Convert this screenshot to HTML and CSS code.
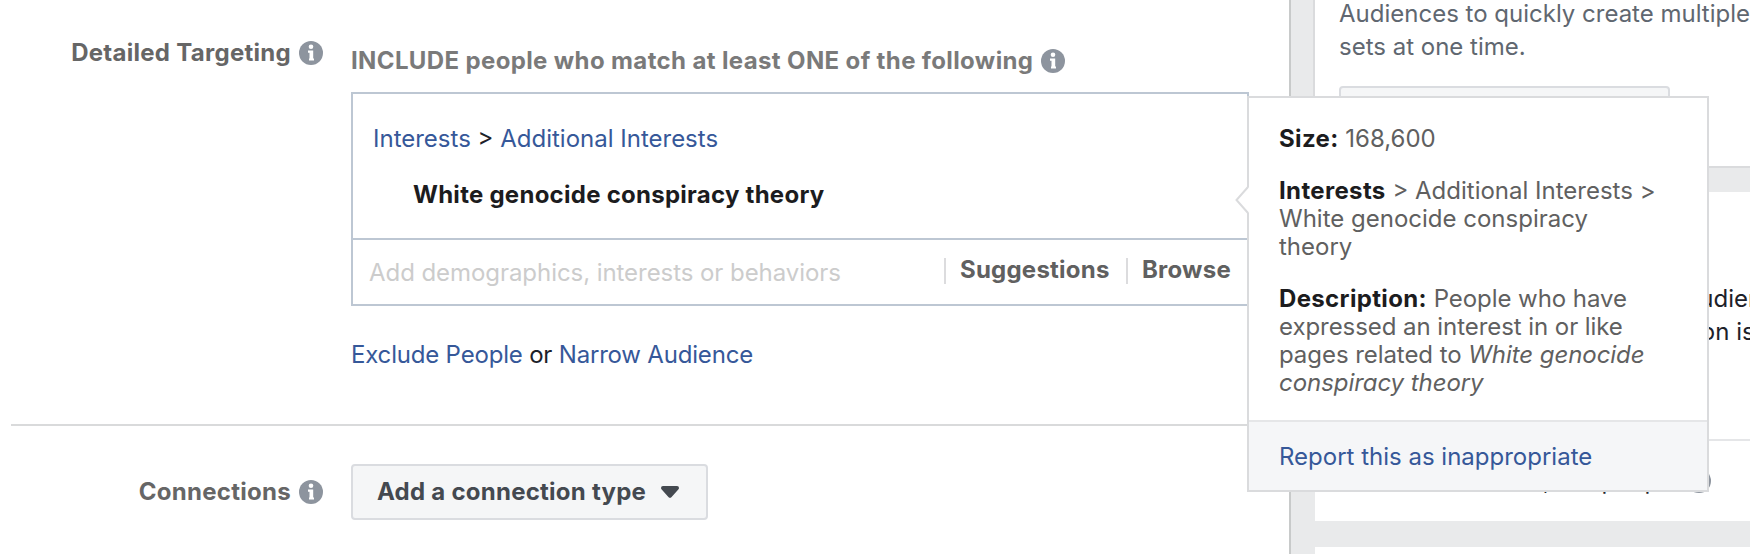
FILE: index.html
```
<!DOCTYPE html>
<html lang="en">
<head>
    <meta charset="UTF-8">
    <meta name="viewport" content="width=device-width, initial-scale=1.0">
    <title>Detailed Targeting</title>
    <link rel="stylesheet" href="styles.css">
</head>
<body>
    <svg class="defs" width="0" height="0">
        <symbol id="info" viewBox="0 0 24 24">
            <circle cx="12" cy="12" r="12" fill="#8d949e"/>
            <circle cx="12" cy="5.8" r="2.3" fill="#fff"/>
            <path d="M9 9.500h5.200v8h.8v2h-5v-2h.5v-5.800H9z" fill="#fff"/>
        </symbol>
    </svg>
    <div class="page">
        <div class="form">
            <div class="row targeting">
                <div class="label">Detailed Targeting <svg class="info"><use href="#info"/></svg></div>
                <div class="field">
                    <div class="include">INCLUDE people who match at least ONE of the following <svg class="info"><use href="#info"/></svg></div>
                    <div class="picker">
                        <div class="selected">
                            <div class="crumbs"><a href="#">Interests</a> &gt; <a href="#">Additional Interests</a></div>
                            <div class="interest">White genocide conspiracy theory</div>
                        </div>
                        <div class="search">
                            <div class="placeholder">Add demographics, interests or behaviors</div>
                            <div class="action suggestions">Suggestions</div>
                            <div class="action browse">Browse</div>
                        </div>
                    </div>
                    <div class="refine"><a href="#">Exclude People</a> or <a href="#">Narrow Audience</a></div>
                </div>
            </div>
            <div class="row connections">
                <div class="label">Connections <svg class="info"><use href="#info"/></svg></div>
                <div class="field">
                    <button class="dropdown"><span>Add a connection type</span>
                        <svg width="18" height="12" viewBox="0 0 18 12"><path d="M2 0h14q2 0 2 2 0 .9-.7 1.600L10.600 11q-1.600 1.700-3.200 0L.7 3.600Q0 2.900 0 2 0 0 2 0z" fill="#444950"/></svg>
                    </button>
                </div>
            </div>
        </div>
        <div class="sidebar">
            <div class="card tip">
                <p>Audiences to quickly create multiple<br>sets at one time.</p>
                <div class="card-button"></div>
            </div>
            <div class="card audience">
                <div class="definition">Your audience<br>selection is</div>
                <div class="reach">Potential Reach: 230,000 people <svg class="info"><use href="#info"/></svg></div>
            </div>
            <div class="card"></div>
        </div>
        <div class="tooltip">
            <svg class="arrow" width="14" height="28" viewBox="0 0 14 28"><path d="M14 1L2 14l12 13z" fill="#fff"/><path d="M13 1L1.500 14 13 27" fill="none" stroke="#dadbdd" stroke-width="2"/></svg>
            <div class="tooltip-body">
                <p class="size"><b>Size:</b> 168,600</p>
                <p class="path"><b>Interests</b> &gt; Additional Interests &gt;<br>White genocide conspiracy<br>theory</p>
                <p class="desc"><b>Description:</b> People who have<br>expressed an interest in or like<br>pages related to <i>White genocide<br>conspiracy theory</i></p>
            </div>
            <div class="tooltip-footer"><a href="#">Report this as inappropriate</a></div>
        </div>
    </div>
</body>
</html>
```
FILE: styles.css
```
* {
    box-sizing: border-box;
}
body {
    margin: 0;
    font-family: Inter, "Liberation Sans", sans-serif;
    font-size: 24px;
    line-height: 28px;
    color: #1d2129;
    background: #fff;
    overflow: hidden;
}
a {
    color: #365899;
    text-decoration: none;
}
p {
    margin: 0;
}
.defs {
    position: absolute;
}
.info {
    width: 24px;
    height: 24px;
    flex: none;
}
.page {
    position: relative;
    display: flex;
    width: 1750px;
    height: 554px;
    overflow: hidden;
    white-space: nowrap;
}

/* form column */
.form {
    width: 1289px;
    flex: none;
    padding-left: 11px;
}
.row {
    display: flex;
}
.targeting {
    height: 426px;
    border-bottom: 2px solid #d9dadb;
}
.label {
    display: flex;
    justify-content: flex-end;
    align-items: center;
    gap: 8px;
    width: 312px;
    height: 28px;
    margin-right: 28px;
    font-weight: 700;
    letter-spacing: 0.28px;
    color: #666;
}
.targeting .label {
    margin-top: 39px;
}
.field {
    flex: 1;
}
.include {
    display: flex;
    align-items: center;
    gap: 8px;
    height: 28px;
    margin-top: 47px;
    font-weight: 700;
    letter-spacing: 0.37px;
    color: #7a7a7a;
}
.picker {
    width: 898px;
    height: 214px;
    margin-top: 17px;
    border: 2px solid #bdc7d3;
}
.selected {
    height: 146px;
    padding: 31px 0 0 20px;
    border-bottom: 2px solid #bdc7d3;
}
.interest {
    margin: 28px 0 0 40px;
    font-weight: 700;
    letter-spacing: 0.26px;
    color: #1c1c1e;
}
.search {
    display: flex;
    padding: 18px 0 0 16px;
}
.placeholder {
    width: 575px;
    padding-top: 1px;
    letter-spacing: -0.06px;
    color: #ccc;
}
.action {
    height: 26px;
    padding-left: 14px;
    border-left: 2px solid #dcdcde;
    font-weight: 700;
    letter-spacing: 0.22px;
    line-height: 24px;
    color: #606060;
}
.suggestions {
    width: 182px;
}
.refine {
    margin-top: 35px;
    letter-spacing: -0.19px;
}
.connections .label {
    margin-top: 52px;
}
.dropdown {
    display: flex;
    align-items: center;
    justify-content: space-between;
    width: 357px;
    height: 56px;
    margin-top: 38px;
    padding: 0 27px 0 24px;
    border: 2px solid #dadce0;
    border-radius: 4px;
    background: #f5f6f7;
    font: inherit;
    font-weight: 700;
    letter-spacing: 0.25px;
    color: #444950;
}

/* right column */
.sidebar {
    flex: 1;
    display: flex;
    flex-direction: column;
    gap: 26px;
    padding-left: 24px;
    border-left: 2px solid #c8caca;
    background: #e9eaeb;
}
.card {
    flex: none;
    height: 200px;
    background: #fff;
}
.tip {
    height: 166px;
    margin-left: -2px;
    padding: 0 0 0 24px;
    border-left: 2px solid #dadbdd;
    box-shadow: 0 2px 0 #dadbdd;
    line-height: 33px;
    color: #606770;
}
.tip p {
    margin-top: -3px;
}
.card-button {
    width: 331px;
    height: 56px;
    margin-top: 23px;
    border: 2px solid #dadce0;
    border-radius: 4px;
    background: #f5f6f7;
}
.audience {
    height: 329px;
}
.definition {
    height: 249px;
    padding: 90px 0 0 312px;
    border-bottom: 2px solid #e5e6e8;
    line-height: 33px;
}
.reach {
    display: flex;
    align-items: center;
    justify-content: flex-end;
    gap: 8px;
    width: 396px;
    margin-top: 26px;
}

/* hover card */
.tooltip {
    position: absolute;
    left: 1247px;
    top: 96px;
    width: 462px;
    height: 396px;
    border: 2px solid #dadbdd;
    background: #fff;
}
.arrow {
    position: absolute;
    left: -14px;
    top: 88px;
}
.tooltip-body {
    height: 322px;
    padding: 27px 0 0 30px;
    color: #606060;
}
.tooltip-body p {
    margin-bottom: 24px;
}
.tooltip-body .desc {
    letter-spacing: -0.06px;
}
.tooltip-body b {
    font-weight: 700;
    letter-spacing: 0.35px;
    color: #1c1c1e;
}
.tooltip-footer {
    height: 70px;
    padding: 21px 0 0 30px;
    border-top: 2px solid #e5e6e8;
    background: #f5f6f8;
}
```
